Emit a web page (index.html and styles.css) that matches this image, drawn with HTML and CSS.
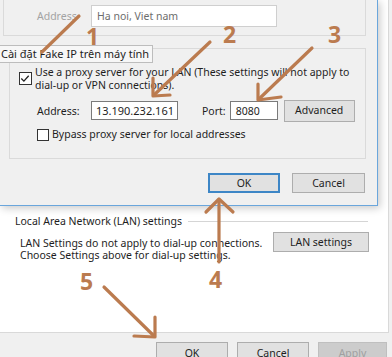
FILE: index.html
```html
<!DOCTYPE html>
<html>
<head>
<meta charset="utf-8">
<link rel="stylesheet" href="styles.css">
</head>
<body>
<div class="screen">
  <div class="main-window">
    <div class="tab-page">
      <div class="lan-group">
        <div class="group-head"><span class="group-title">Local Area Network (LAN) settings</span><i class="head-line"></i></div>
        <div class="lan-row">
          <p class="lan-text"><span class="line">LAN Settings do not apply to dial-up connections.</span><span class="line">Choose Settings above for dial-up settings.</span></p>
          <button class="btn lan-btn">LAN settings</button>
        </div>
      </div>
    </div>
    <div class="footer">
      <button class="btn foot-btn">OK</button>
      <button class="btn foot-btn">Cancel</button>
      <button class="btn foot-btn disabled">Apply</button>
    </div>
  </div>

  <div class="dialog">
    <div class="group auto-group">
      <div class="field-row">
        <span class="label muted">Address</span>
        <span class="input wide disabled-input">Ha noi, Viet nam</span>
      </div>
    </div>
    <div class="group proxy-group">
      <div class="check-row">
        <span class="check"><svg viewBox="0 0 13 13" width="13" height="13"><path d="M2.5 6.5 L5.3 9.3 L10.5 3.5" fill="none" stroke="#222" stroke-width="1.4"/></svg></span>
        <span class="check-text">Use a proxy server for your LAN (These settings will not apply to<br>dial-up or VPN connections).</span>
      </div>
      <div class="addr-row">
        <span class="label addr-label">Address:</span>
        <span class="input addr-input"><span class="scroll-text">13.190.232.161</span></span>
        <span class="label port-label">Port:</span>
        <span class="input port-input">8080</span>
        <button class="btn adv-btn">Advanced</button>
      </div>
      <div class="check-row bypass-row">
        <span class="check small"></span>
        <span class="check-text">Bypass proxy server for local addresses</span>
      </div>
    </div>
    <div class="dialog-buttons">
      <button class="btn dlg-btn default">OK</button>
      <button class="btn dlg-btn">Cancel</button>
    </div>
  </div>

  <div class="tooltip">Cài đặt Fake IP trên máy tính</div>

  <svg class="arrows" viewBox="0 0 392 357" width="392" height="357">
    <g fill="none" stroke="#bb7b4f" stroke-width="3.2" stroke-linecap="round" stroke-linejoin="round">
      <path d="M79 16 L42 52"/>
      <path d="M210 42 L154 95"/>
      <path d="M153 78 L153 96 L170 95"/>
      <path d="M312 48 L259 99"/>
      <path d="M258 84 L258 100 L281 97"/>
      <path d="M219 262 L219 200"/>
      <path d="M206 212 L219 199 L233 212"/>
      <path d="M104 287 L153 335"/>
      <path d="M155 317 L155 337 L134 336"/>
    </g>
  </svg>
  <span class="num n1">1</span>
  <span class="num n2">2</span>
  <span class="num n3">3</span>
  <span class="num n4">4</span>
  <span class="num n5">5</span>
</div>
</body>
</html>
```

FILE: styles.css
```css
* { box-sizing: border-box; }
html, body { margin: 0; padding: 0; }
body {
  width: 392px;
  height: 357px;
  overflow: hidden;
  font-family: "Noto Sans", "Open Sans", sans-serif;
  font-size: 10.5px;
  color: #1e1e1e;
  background: #f0f0f0;
}
.screen {
  position: relative;
  width: 392px;
  height: 357px;
  overflow: hidden;
}
p { margin: 0; }
button { font: inherit; color: inherit; }

/* underlying Internet Options window */
.main-window {
  display: flex;
  flex-direction: column;
  width: 392px;
  height: 357px;
  background: #f0f0f0;
}
.tab-page {
  flex: none;
  width: 389px;
  height: 333px;
  background: #fff;
  border-right: 1px solid #d9d9d9;
  border-bottom: 1px solid #d9d9d9;
  padding-top: 213px;
}
.group-head {
  display: flex;
  align-items: center;
  padding-left: 15px;
  margin-right: 20px;
  height: 16px;
}
.group-title { white-space: nowrap; }
.head-line {
  flex: 1;
  height: 1px;
  background: #d5d5d5;
  margin-left: 6px;
}
.lan-row {
  display: flex;
  align-items: flex-start;
  justify-content: space-between;
  padding-left: 20px;
  padding-right: 19px;
  margin-top: 3px;
}
.lan-text {
  display: flex;
  flex-direction: column;
  margin-top: 5px;
  white-space: nowrap;
}
.lan-text .line {
  display: block;
  height: 12px;
  line-height: 12px;
}
.btn {
  flex: none;
  display: inline-flex;
  align-items: center;
  justify-content: center;
  background: #e1e1e1;
  border: 1px solid #adadad;
  padding: 0;
  height: 20px;
  line-height: 1;
}
.lan-btn { width: 96px; height: 20px; }
.footer {
  flex: none;
  display: flex;
  justify-content: flex-end;
  gap: 9px;
  padding-top: 9px;
  padding-right: 5px;
}
.foot-btn { width: 72px; height: 22px; }
.foot-btn.disabled { color: #a0a0a0; background: #cccccc; border-color: #bfbfbf; width: 69px; }

/* LAN settings dialog */
.dialog {
  position: absolute;
  left: 0;
  top: 0;
  width: 378px;
  height: 206px;
  background: #f0f0f0;
  border-right: 1px solid #6aa6dc;
  border-bottom: 1px solid #6aa6dc;
  box-shadow: 2px 2px 8px rgba(0,0,0,0.22);
}
.group {
  border: 1px solid #dadada;
}
.auto-group {
  margin-left: 3px;
  width: 363px;
  height: 36px;
  border-top: none;
  padding-top: 5px;
  padding-left: 33px;
}
.field-row { display: flex; align-items: center; }
.label { white-space: nowrap; }
.muted { color: #a3a3a3; width: 54px; }
.input {
  flex: none;
  display: inline-flex;
  align-items: center;
  background: #fff;
  border: 1px solid #7a7a7a;
  height: 19px;
  padding-left: 5px;
  overflow: hidden;
  white-space: nowrap;
}
.wide { width: 186px; height: 22px; }
.disabled-input { border-color: #cfcfcf; color: #6d6d6d; padding-left: 5px; }
.proxy-group {
  margin: 12px 0 0 9px;
  width: 357px;
  height: 111px;
  padding-top: 23px;
}
.check-row {
  display: flex;
  align-items: flex-start;
  margin-left: 9px;
}
.check {
  flex: none;
  width: 13px;
  height: 13px;
  background: #fff;
  border: 1px solid #333;
  display: inline-flex;
}
.check svg { margin: -1px 0 0 -1px; }
.check.small { width: 12px; height: 12px; }
.check-text {
  margin-left: 3px;
  line-height: 13px;
  margin-top: -6px;
  white-space: nowrap;
}
.addr-row {
  display: flex;
  align-items: center;
  margin-top: 7px;
  margin-left: 27px;
  height: 23px;
}
.addr-label { width: 54px; }
.addr-input { width: 87px; padding-left: 0; justify-content: flex-end; padding-right: 3px; font-size: 11px; }
.scroll-text { white-space: nowrap; }
.port-label { margin-left: 24px; }
.port-input { width: 48px; margin-left: 4px; }
.adv-btn { width: 71px; height: 22px; margin-left: 6px; }
.bypass-row { margin-left: 27px; margin-top: 7px; }
.bypass-row .check-text { margin-top: -1px; }
.dialog-buttons {
  display: flex;
  justify-content: flex-end;
  gap: 12px;
  margin-top: 14px;
  padding-right: 12px;
}
.dlg-btn { width: 73px; height: 20px; }
.dlg-btn.default { border: 2px solid #3d86c6; width: 72px; }

/* tooltip */
.tooltip {
  position: absolute;
  left: -3px;
  top: 45px;
  height: 18px;
  width: 156px;
  padding-left: 3px;
  background: #f7f7f7;
  border: 1px solid #bdbdbd;
  font-size: 11px;
  line-height: 16px;
  white-space: nowrap;
}

/* annotations */
.arrows {
  position: absolute;
  left: 0;
  top: 0;
}
.num {
  position: absolute;
  font-family: "Open Sans", "Noto Sans", sans-serif;
  font-weight: 700;
  font-size: 23px;
  line-height: 17px;
  color: #bb7b4f;
}
.n1 { left: 86px; top: 28px; }
.n2 { left: 223px; top: 26px; }
.n3 { left: 328px; top: 26px; }
.n4 { left: 209px; top: 271px; }
.n5 { left: 80px; top: 273px; }
```
